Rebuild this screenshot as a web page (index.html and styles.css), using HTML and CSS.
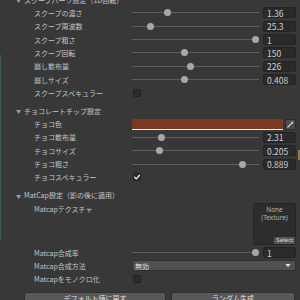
FILE: index.html
```html
<!DOCTYPE html>
<html lang="ja">

<head>
  <meta charset="UTF-8">
  <meta name="viewport" content="width=device-width, initial-scale=1.0">
  <title>Inspector</title>
  <link rel="stylesheet" href="styles.css">
</head>

<body>
<div class="inspector">

  <!-- scoop parts -->
  <div class="section-head first"><span class="fold">▼</span>スクープパーツ設定（1D回転）</div>

  <div class="row">
    <div class="label">スクープの濃さ</div>
    <div class="slider">
      <div class="track"><span class="knob" style="left: 28%"></span></div>
      <div class="field">1.36</div>
    </div>
  </div>
  <div class="row">
    <div class="label">スクープ周波数</div>
    <div class="slider">
      <div class="track"><span class="knob" style="left: 14.5%"></span></div>
      <div class="field">25.3</div>
    </div>
  </div>
  <div class="row">
    <div class="label">スクープ粗さ</div>
    <div class="slider">
      <div class="track"><span class="knob" style="left: 97.5%"></span></div>
      <div class="field">1</div>
    </div>
  </div>
  <div class="row">
    <div class="label">スクープ回転</div>
    <div class="slider">
      <div class="track"><span class="knob" style="left: 41.7%"></span></div>
      <div class="field">150</div>
    </div>
  </div>
  <div class="row">
    <div class="label">崩し散布量</div>
    <div class="slider">
      <div class="track"><span class="knob" style="left: 45.7%"></span></div>
      <div class="field">226</div>
    </div>
  </div>
  <div class="row">
    <div class="label">崩しサイズ</div>
    <div class="slider">
      <div class="track"><span class="knob" style="left: 41%"></span></div>
      <div class="field">0.408</div>
    </div>
  </div>
  <div class="row">
    <div class="label">スクープスペキュラー</div>
    <div class="check"></div>
  </div>

  <!-- chocolate chips -->
  <div class="section-head"><span class="fold">▼</span>チョコレートチップ設定</div>

  <div class="row">
    <div class="label">チョコ色</div>
    <div class="color-field">
      <div class="swatch"></div>
      <button class="picker">
        <svg viewBox="0 0 8 8" width="7" height="7" stroke="#e6e6e6" fill="#e6e6e6">
          <line x1="1" y1="7" x2="4.6" y2="3.4" stroke-width="1.2" stroke-linecap="round"></line>
          <path d="M4.2 2.2 L6.2 0.6 L7.4 1.8 L5.8 3.8 Z" stroke="none"></path>
        </svg>
      </button>
    </div>
  </div>
  <div class="row">
    <div class="label">チョコ散布量</div>
    <div class="slider">
      <div class="track"><span class="knob" style="left: 23.6%"></span></div>
      <div class="field">2.31</div>
    </div>
  </div>
  <div class="row">
    <div class="label">チョコサイズ</div>
    <div class="slider">
      <div class="track"><span class="knob" style="left: 22%"></span></div>
      <div class="field">0.205</div>
    </div>
  </div>
  <div class="row">
    <div class="label">チョコ粗さ</div>
    <div class="slider">
      <div class="track"><span class="knob" style="left: 87.4%"></span></div>
      <div class="field">0.889</div>
    </div>
  </div>
  <div class="row">
    <div class="label">チョコスペキュラー</div>
    <div class="check on">
      <svg viewBox="0 0 8 8" width="8" height="8" fill="none" stroke="#f0f0f0">
        <path d="M1.6 4.3 L3.3 5.9 L6.5 2.2" stroke-width="1.3" stroke-linecap="round" stroke-linejoin="round"></path>
      </svg>
    </div>
  </div>

  <!-- matcap -->
  <div class="section-head"><span class="fold">▼</span>MatCap設定（影の後に適用）</div>

  <div class="row tall">
    <div class="label">Matcapテクスチャ</div>
    <div class="texture">
      <div class="texture-name">None<br>(Texture)</div>
      <div class="texture-select">Select</div>
    </div>
  </div>
  <div class="row">
    <div class="label">Matcap合成率</div>
    <div class="slider">
      <div class="track"><span class="knob" style="left: 97.5%"></span></div>
      <div class="field">1</div>
    </div>
  </div>
  <div class="row">
    <div class="label">Matcap合成方法</div>
    <div class="dropdown">
      <span>無効</span>
      <svg viewBox="0 0 8 6" width="6" height="4" fill="#e0e0e0">
        <path d="M0 0 H8 L4 5 Z"></path>
      </svg>
    </div>
  </div>
  <div class="row">
    <div class="label">Matcapをモノクロ化</div>
    <div class="check"></div>
  </div>

  <div class="buttons">
    <button class="btn wide">デフォルト値に戻す</button>
    <button class="btn">ランダム生成</button>
  </div>

  <div class="edge-left"></div>
  <div class="edge-right"></div>
</div>
</body>

</html>
```

FILE: styles.css
```css
*,
*::before,
*::after {
  box-sizing: border-box;
}

body {
  margin: 0;
  height: 300px;
  overflow: hidden;
  background: #383838;
  font-family: "Noto Sans CJK JP", "Noto Sans", sans-serif;
  font-size: 7px;
  color: #c4c4c4;
}

.inspector {
  position: relative;
  margin-top: -7px;
  padding-right: 4px;
}

/* section headers */

.section-head {
  height: 13.333px;
  margin-top: 4.5px;
  padding-left: 16px;
  display: flex;
  align-items: center;
  gap: 2px;
  color: #c8c8c8;
}

.section-head.first {
  margin-top: 0;
}

.fold {
  font-size: 5px;
  color: #a0a0a0;
  width: 6px;
}

/* rows */

.row {
  height: 13.333px;
  display: flex;
  align-items: center;
}

.row.tall {
  height: 44px;
  align-items: flex-start;
}

.row.tall .label {
  height: 13.333px;
  display: flex;
  align-items: center;
}

.label {
  width: 132px;
  flex: none;
  padding-left: 34px;
  white-space: nowrap;
}

/* slider */

.slider {
  flex: 1;
  display: flex;
  align-items: center;
  gap: 4px;
}

.track {
  position: relative;
  flex: 1;
  height: 1px;
  background: #5f5f5f;
}

.knob {
  position: absolute;
  top: -3px;
  width: 7px;
  height: 7px;
  margin-left: -3.5px;
  border-radius: 50%;
  background: #a8a8a8;
}

.field {
  width: 33px;
  height: 11px;
  padding-left: 3px;
  display: flex;
  align-items: center;
  background: #2a2a2a;
  border: 1px solid #232323;
  border-radius: 2px;
  font-size: 8.5px;
  color: #d0d0d0;
}

/* checkbox */

.check {
  width: 8px;
  height: 8px;
  margin-left: 1px;
  display: grid;
  place-items: center;
  background: #2c2c2c;
  border: 1px solid #222;
  border-radius: 1.5px;
}

.check svg {
  margin: -1px;
}

/* colour */

.color-field {
  flex: 1;
  display: flex;
  align-items: center;
  gap: 2px;
}

.swatch {
  flex: 1;
  height: 11px;
  background: #7a3921;
  border-bottom: 1.5px solid #f4f4f4;
}

.picker {
  width: 11px;
  height: 11px;
  padding: 0;
  display: grid;
  place-items: center;
  background: #4d4d4d;
  border: 1px solid #2b2b2b;
  border-radius: 2px;
}

/* texture slot */

.texture {
  margin-left: auto;
  margin-top: 1.5px;
  width: 43px;
  height: 42px;
  position: relative;
  background: #2d2d2d;
  border: 1px solid #242424;
  border-radius: 2px;
  font-family: "Noto Sans", sans-serif;
  text-align: center;
  color: #b4b4b4;
}

.texture-name {
  padding-top: 2px;
  font-size: 6.5px;
  line-height: 8px;
}

.texture-select {
  position: absolute;
  right: 0;
  bottom: 0;
  padding: 0 2px;
  height: 7px;
  line-height: 7px;
  font-size: 6px;
  background: #565656;
  color: #dcdcdc;
  border-top-left-radius: 2px;
}

/* dropdown */

.dropdown {
  flex: 1;
  height: 11px;
  padding: 0 4px 0 2px;
  display: flex;
  align-items: center;
  justify-content: space-between;
  background: #515151;
  border: 1px solid #2f2f2f;
  border-radius: 2px;
  color: #dedede;
}

/* buttons */

.buttons {
  margin-top: 6px;
  padding-left: 24px;
  padding-right: 1px;
  display: flex;
  gap: 5px;
}

.btn {
  flex: 124;
  height: 13px;
  padding: 0;
  background: #585858;
  border: 1px solid #303030;
  border-radius: 3px;
  font-family: inherit;
  font-size: 7px;
  color: #e2e2e2;
}

.btn.wide {
  flex: 142;
}

/* window edges */

.edge-left {
  position: absolute;
  left: 0;
  top: 62px;
  width: 1px;
  height: 185px;
  background: #3f5b5c;
}

.edge-right {
  position: absolute;
  right: 0;
  top: 157px;
  width: 2px;
  height: 10px;
  background: #8a7d52;
}
```
